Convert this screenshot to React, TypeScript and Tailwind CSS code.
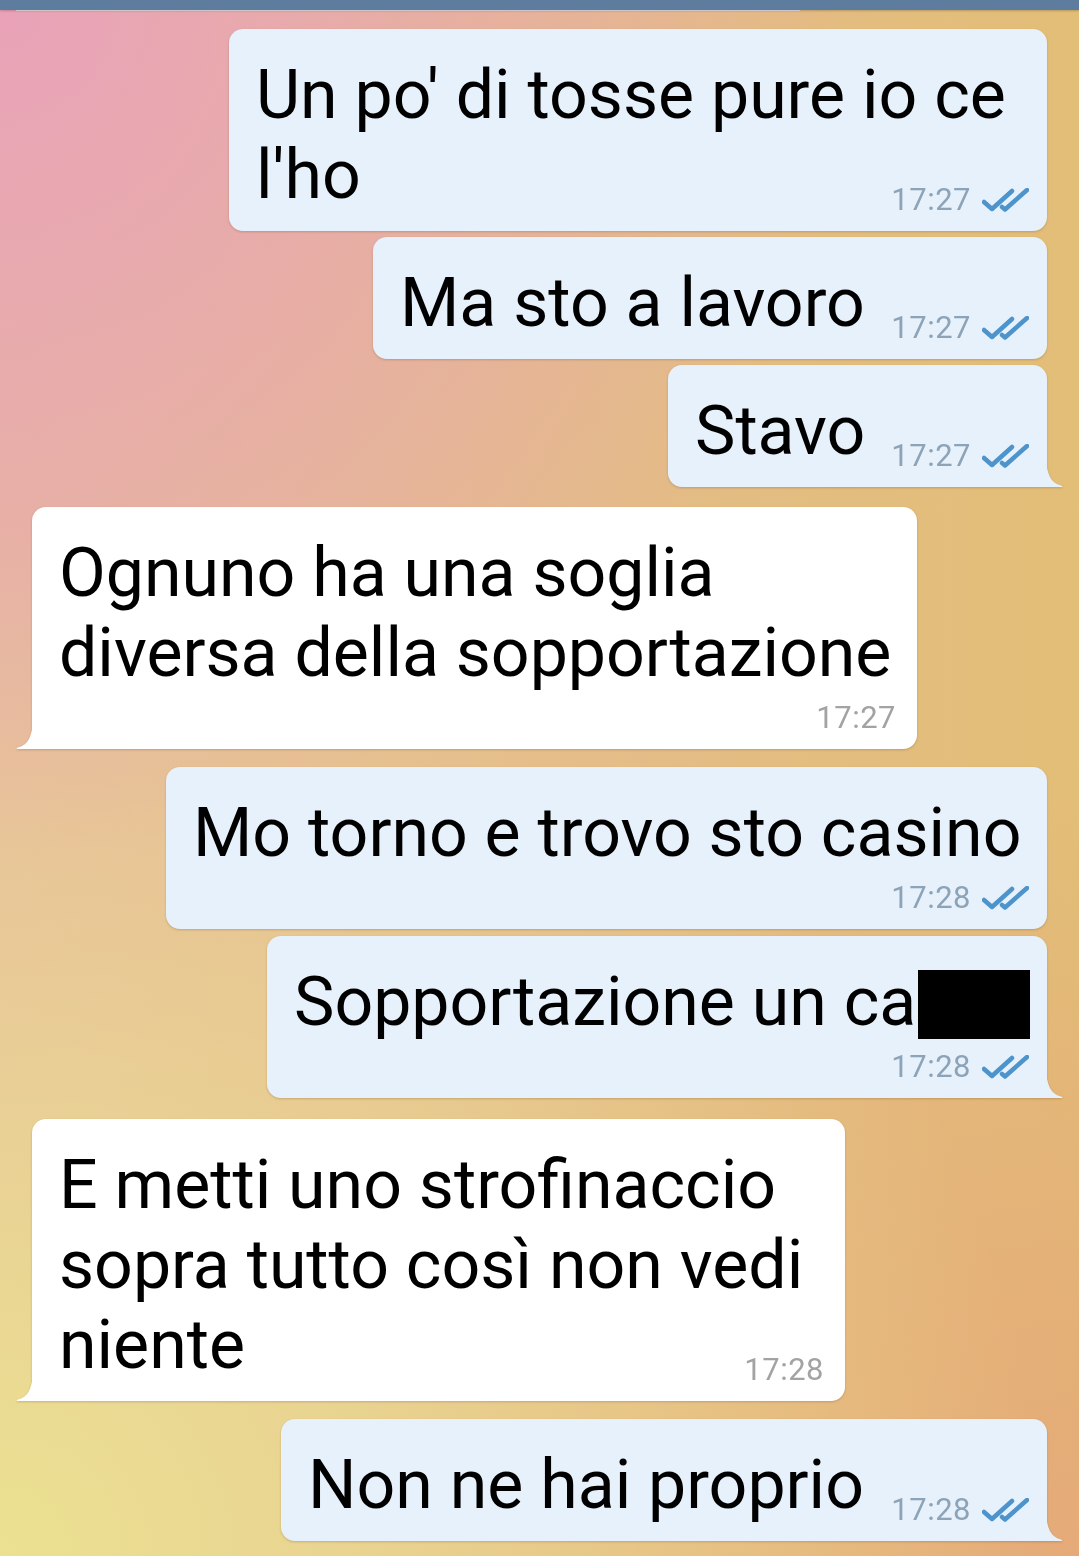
import React from 'react';

type Msg = {
  out: boolean;
  width: string;
  lines: React.ReactNode[];
  time: string;
  below?: boolean;
  tail?: boolean;
  gap: string;
};

const messages: Msg[] = [
  { out: true, width: 'w-[818px]', lines: ["Un po' di tosse pure io ce", "l'ho"], time: '17:27', gap: 'mt-[18px]' },
  { out: true, width: 'w-[674px]', lines: ['Ma sto a lavoro'], time: '17:27', gap: 'mt-[6px]' },
  { out: true, width: 'w-[379px]', lines: ['Stavo'], time: '17:27', tail: true, gap: 'mt-[6px]' },
  {
    out: false,
    width: 'w-[885px]',
    lines: ['Ognuno ha una soglia', 'diversa della sopportazione'],
    time: '17:27',
    below: true,
    tail: true,
    gap: 'mt-[20px]',
  },
  { out: true, width: 'w-[881px]', lines: ['Mo torno e trovo sto casino'], time: '17:28', below: true, gap: 'mt-[18px]' },
  {
    out: true,
    width: 'w-[780px]',
    lines: [
      <>
        Sopportazione un ca
        <span className="inline-block w-[112px] h-[69px] bg-black align-[-14px] ml-[2px]" />
      </>,
    ],
    time: '17:28',
    below: true,
    tail: true,
    gap: 'mt-[7px]',
  },
  {
    out: false,
    width: 'w-[813px]',
    lines: ['E metti uno strofinaccio', 'sopra tutto così non vedi', 'niente'],
    time: '17:28',
    tail: true,
    gap: 'mt-[21px]',
  },
  { out: true, width: 'w-[766px]', lines: ['Non ne hai proprio'], time: '17:28', tail: true, gap: 'mt-[18px]' },
];

const Checks = () => (
  <svg width="47" height="24" viewBox="0 0 47 24" fill="none" className="shrink-0">
    <path d="M2 14 L10 21 L30 3" stroke="#4d93cc" strokeWidth="4.5" strokeLinecap="round" strokeLinejoin="round" />
    <path d="M20 19 L23 21.5 L45 2" stroke="#4d93cc" strokeWidth="4.5" strokeLinecap="round" strokeLinejoin="round" />
  </svg>
);

const Tail = ({ out }: { out: boolean }) =>
  out ? (
    <svg width="17" height="28" viewBox="0 0 17 28" className="absolute bottom-0 -right-[16px]">
      <path d="M0 0 C1 14 4 24 15 26.4 C17 27 16.6 28 15 28 L0 28 Z" fill="#e7f1fb" />
    </svg>
  ) : (
    <svg width="17" height="28" viewBox="0 0 17 28" className="absolute bottom-0 -left-[16px]">
      <path d="M17 0 C16 14 13 24 2 26.4 C0 27 0.4 28 2 28 L17 28 Z" fill="#ffffff" />
    </svg>
  );

const Bubble = ({ m }: { m: Msg }) => {
  const corners = m.tail ? (m.out ? 'rounded-[14px] rounded-br-none' : 'rounded-[14px] rounded-bl-none') : 'rounded-[14px]';
  return (
    <div className={`flex ${m.out ? 'justify-end' : 'justify-start'} ${m.gap}`}>
      <div className={`relative ${m.width} drop-shadow-[0_1px_1px_rgba(90,60,20,0.25)]`}>
        <div
          className={`${corners} ${m.out ? 'bg-[#e7f1fb] pr-[18px]' : 'bg-white pr-[21px]'} pl-[27px] pt-[26px] pb-[16px]`}
        >
          <div className="text-[68px] leading-[80px] text-black whitespace-nowrap">
            {m.lines.map((l, i) => (
              <div key={i}>{l}</div>
            ))}
          </div>
          <div className={`flex justify-end ${m.below ? 'mt-[10px]' : '-mt-[30px]'}`}>
            <div className="flex items-center gap-[11px] h-[30px]">
              <span className={`text-[31px] tracking-[0.5px] leading-[30px] ${m.out ? 'text-[#8ca3b8]' : 'text-[#a3a3a3]'}`}>
                {m.time}
              </span>
              {m.out && <Checks />}
            </div>
          </div>
        </div>
        {m.tail && <Tail out={m.out} />}
      </div>
    </div>
  );
};

export default function App() {
  return (
    <div
      className="h-[1556px] w-full overflow-hidden font-['Roboto',sans-serif] bg-[radial-gradient(circle_at_0%_0%,#e9a2b8_0%,transparent_45%),radial-gradient(circle_at_0%_100%,#ebe191_0%,transparent_55%),radial-gradient(circle_at_100%_100%,#e5aa78_0%,transparent_40%),linear-gradient(to_right,#e6b89c,#e2be77)]"
    >
      <div className="relative z-10 h-[10px] bg-[#5e7c9d] shadow-[0_1px_2px_rgba(0,0,0,0.2)]" />
      <div className="ml-[16px] w-[784px] h-[1px] bg-[#efe4e8]" />
      <div className="px-[32px]">
        {messages.map((m, i) => (
          <Bubble key={i} m={m} />
        ))}
      </div>
    </div>
  );
}
